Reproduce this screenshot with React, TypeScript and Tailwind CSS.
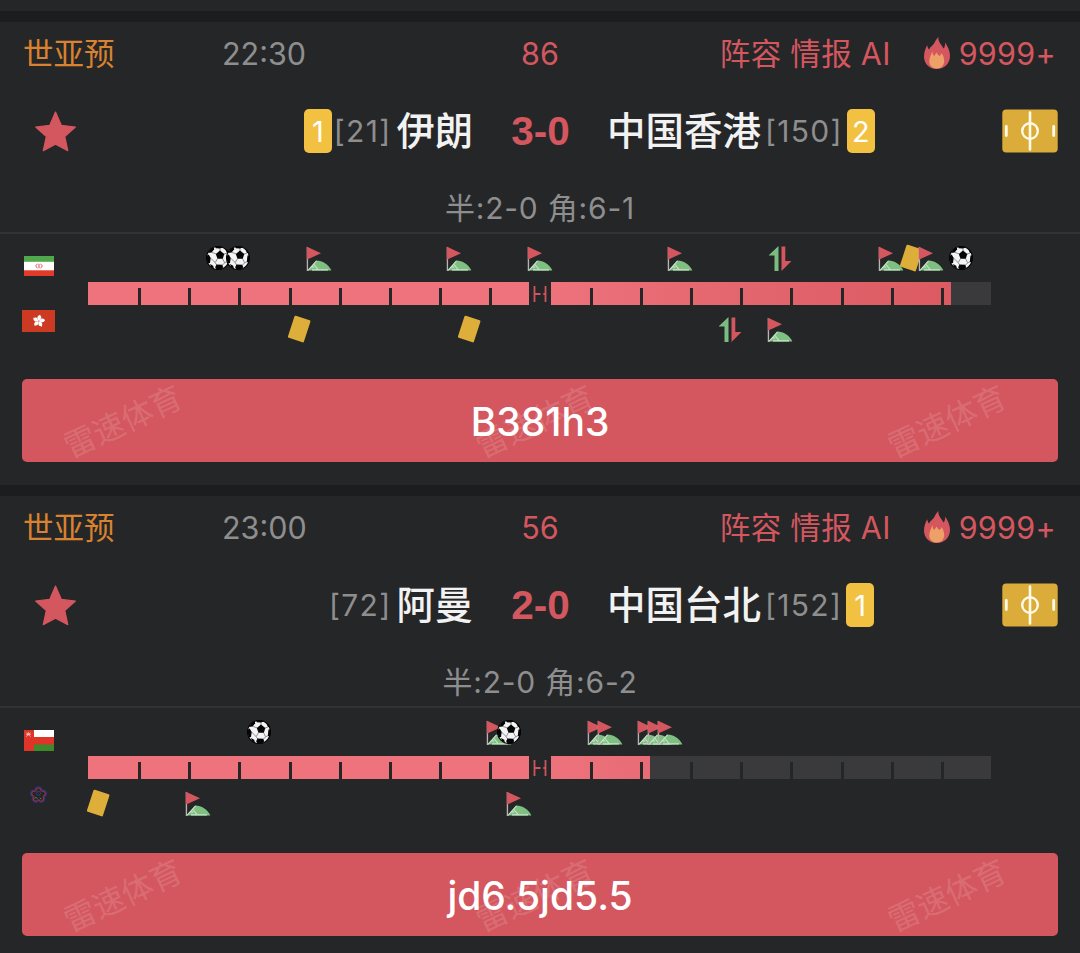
type EventKind = "goal" | "corner" | "card" | "sub";

interface MatchEvent {
  minute: number;
  kind: EventKind;
}

interface Team {
  name: string;
  rank: number;
  cards: number;
  flag: "iran" | "hongkong" | "oman" | "taipei";
  events: MatchEvent[];
}

interface Match {
  league: string;
  time: string;
  minute: number;
  score: string;
  half: string;
  corners: string;
  home: Team;
  away: Team;
  note: string;
}

const matches: Match[] = [
  {
    league: "世亚预",
    time: "22:30",
    minute: 86,
    score: "3-0",
    half: "2-0",
    corners: "6-1",
    home: {
      name: "伊朗",
      rank: 21,
      cards: 1,
      flag: "iran",
      events: [
        { minute: 13, kind: "goal" },
        { minute: 15, kind: "goal" },
        { minute: 23, kind: "corner" },
        { minute: 37, kind: "corner" },
        { minute: 45, kind: "corner" },
        { minute: 59, kind: "corner" },
        { minute: 69, kind: "sub" },
        { minute: 80, kind: "corner" },
        { minute: 82, kind: "card" },
        { minute: 84, kind: "corner" },
        { minute: 87, kind: "goal" },
      ],
    },
    away: {
      name: "中国香港",
      rank: 150,
      cards: 2,
      flag: "hongkong",
      events: [
        { minute: 21, kind: "card" },
        { minute: 38, kind: "card" },
        { minute: 64, kind: "sub" },
        { minute: 69, kind: "corner" },
      ],
    },
    note: "B381h3",
  },
  {
    league: "世亚预",
    time: "23:00",
    minute: 56,
    score: "2-0",
    half: "2-0",
    corners: "6-2",
    home: {
      name: "阿曼",
      rank: 72,
      cards: 0,
      flag: "oman",
      events: [
        { minute: 17, kind: "goal" },
        { minute: 41, kind: "corner" },
        { minute: 42, kind: "goal" },
        { minute: 51, kind: "corner" },
        { minute: 52, kind: "corner" },
        { minute: 56, kind: "corner" },
        { minute: 57, kind: "corner" },
        { minute: 58, kind: "corner" },
      ],
    },
    away: {
      name: "中国台北",
      rank: 152,
      cards: 1,
      flag: "taipei",
      events: [
        { minute: 1, kind: "card" },
        { minute: 11, kind: "corner" },
        { minute: 43, kind: "corner" },
      ],
    },
    note: "jd6.5jd5.5",
  },
];

const tickMinutes = Array.from({ length: 17 }, (_, i) => (i + 1) * 5).filter((m) => m !== 45);

const percent = (minute: number) => `${(minute / 90) * 100}%`;

function BallIcon() {
  return (
    <svg className="w-6 h-6" viewBox="0 0 24 24">
      <circle cx="12" cy="12" r="12" fill="#050505" />
      <circle cx="12" cy="12" r="10.9" fill="#f4f4f4" />
      <g stroke="#777" strokeWidth="0.8" fill="none">
        <path d="M14 5V2M17.800 8.200L21 7M16.500 12.600l2.200 4.200M11.500 12.600l-2.300 4M10 7.800L6 6.500M4.500 12l4.700 4.600 1.500 2.400M18.700 16.800L16.500 19M18.700 16.800l3-1.500" />
      </g>
      <g fill="#050505">
        <path d="M14 4.600l4.300 3.300-1.500 4.800h-5.300L9.800 8z" />
        <path d="M9 .4h7l.8 1-3 1.100-4-.3z" />
        <path d="M2 7l3-4.500 2.800-1.300.3 2-2.400 3.200z" />
        <path d="M.3 10l2.400-1.500 2 3.500-.7 5-2.500.5z" />
        <path d="M10.500 18.500l5.800.2.900 2.500-2 2.400-4.400.1-1.700-2.400z" />
        <path d="M21.500 9.500l2.200-.2.200 4-1.500 3.700-1.600-1.500z" />
        <path d="M19 2.600l2.600 2.200 1 2.600-1.700-.6z" />
        <path d="M4 18l3.200 1.700.8 3-3-1.700z" />
      </g>
    </svg>
  );
}

function CornerIcon() {
  return (
    <svg className="w-[25px] h-[25px]" viewBox="0 0 25 25">
      <path d="M1 24.500L10 14.600c6 .2 11.600 3.600 15 9.900z" fill="#7fbf82" />
      <path d="M1.500 24.300L10 14.800M7 18l5 6.200M5.500 23.900h16M4.600 20.700l3 .4" stroke="#c9e3ca" strokeWidth="1.100" fill="none" />
      <rect x="0" y="1" width="1.600" height="24" fill="#b9b3b6" />
      <path d="M0 .5l14.500 6.800L.2 13.800z" fill="#d4575f" />
    </svg>
  );
}

function CardIcon() {
  return (
    <svg className="w-6 h-[28px]" viewBox="0 0 24 28">
      <rect x="3.800" y="2.400" width="16.800" height="23.200" rx="1.200" fill="#ddae3a" transform="rotate(18 12 14)" />
    </svg>
  );
}

function SubIcon() {
  return (
    <svg className="w-[23px] h-[25px]" viewBox="0 0 23 25">
      <path d="M10 0v25H6V9.500H0z" fill="#7bbd80" />
      <path d="M13 .5h3.800V15H23L13 25z" fill="#d4575f" />
    </svg>
  );
}

function EventIcon({ kind }: { kind: EventKind }) {
  if (kind === "goal") return <BallIcon />;
  if (kind === "corner") return <CornerIcon />;
  if (kind === "card") return <CardIcon />;
  return <SubIcon />;
}

function FlameIcon() {
  return (
    <svg className="w-[26px] h-8" viewBox="0 0 26 32">
      <path
        d="M14.400 0c-.4 3.200 1 5.200 2.700 7.800 1 1.600 1.800 2.600 2.600 3.700C20.900 9.800 21.300 7.500 21 5.400c2.800 3.700 5 8.400 5 13.400C26 26.500 20.600 32 13 32S0 26.600 0 19.400C0 14.900 1.700 11.300 3.200 8.300c.3 2 .9 3.200 1.900 4.300C6.200 9.500 9.400 8.300 10.800 5.200 11.700 3.400 12.800 1.400 14.400 0z"
        fill="#d4575f"
      />
      <path
        d="M8.400 14c0 2.200.5 3.600 1.800 5 .9-1.100 1.500-2.300 2.400-3.400.7 1.500 1.600 2.500 3 3.400 1-.8 1.600-1.600 2-2.900 1.600 2.500 2.600 5.100 2.600 8 0 4.400-3 7.500-7.200 7.500S5.300 28.600 5.300 24.400c0-4 2-7 3.100-10.400z"
        fill="#eda067"
      />
    </svg>
  );
}

function StarIcon() {
  return (
    <svg className="w-[42px] h-[41px]" viewBox="0 0 42 41">
      <path
        d="M21.500 1l5.900 13.400 14 1.600-10.600 9.600 3 14L21.500 33.200 9.300 39.600l3-14L1.700 16l14-1.600z"
        fill="#d4575f"
        stroke="#d4575f"
        strokeWidth="1.200"
        strokeLinejoin="round"
      />
    </svg>
  );
}

function PitchIcon() {
  return (
    <svg className="w-14 h-[44px]" viewBox="0 0 56 44">
      <rect x="0.300" y="0.500" width="55.400" height="43" rx="4" fill="#dbac39" />
      <g fill="none" stroke="#fffbe9" strokeLinecap="round">
        <path d="M28 3.500v37" strokeWidth="2.600" />
        <circle cx="28" cy="22" r="7.800" strokeWidth="2.400" />
        <path d="M4.300 17.500v9M51.700 17.500v9" strokeWidth="2.800" />
      </g>
    </svg>
  );
}

function Flag({ flag }: { flag: Team["flag"] }) {
  if (flag === "iran") {
    return (
      <svg className="w-[30px] h-5" viewBox="0 0 30 20">
        <rect width="30" height="20" fill="#fff" />
        <rect width="30" height="5.800" fill="#4fa84c" />
        <rect y="14.300" width="30" height="5.700" fill="#df3a2a" />
        <path d="M13.500 8c-2 .8-2 3.200 0 4M16.500 8c2 .8 2 3.200 0 4M15 7.800v4.500" stroke="#e04a4a" strokeWidth="1" fill="none" />
      </svg>
    );
  }
  if (flag === "hongkong") {
    return (
      <svg className="w-[33px] h-[22px]" viewBox="0 0 33 22">
        <rect width="33" height="22" fill="#cd3a24" />
        {[8, 80, 152, 224, 296].map((angle) => (
          <path
            key={angle}
            d="M16.800 10.800c-2.600-1.600-2.600-4.800.6-6.200-.2 1.100 1.600 1.400 1.400 2.900-.1 1.300-1.200 2-2 3.300z"
            fill="#fff"
            transform={`rotate(${angle} 16.800 11)`}
          />
        ))}
      </svg>
    );
  }
  if (flag === "oman") {
    return (
      <svg className="w-[30px] h-[21px]" viewBox="0 0 30 21">
        <rect width="30" height="21" fill="#df3528" />
        <rect x="10" width="20" height="7" fill="#fff" />
        <rect x="10" y="14.500" width="20" height="6.500" fill="#3c8a2c" />
        <path d="M2.300 2.600l4 4M6.300 2.600l-4 4M2.200 4.400h4.600M4.300 2.200v2" stroke="#f6c9c4" strokeWidth="0.900" />
      </svg>
    );
  }
  return (
    <svg className="w-[17px] h-[18px]" viewBox="0 0 17 18">
      {[0, 72, 144, 216, 288].map((angle) => (
        <g key={angle} transform={`rotate(${angle} 8.500 9)`} fill="none">
          <path d="M5.300 4.700C4.900 1.900 6.600.8 8.500.8s3.600 1.100 3.200 3.900" stroke="#26358f" strokeWidth="1.100" />
          <path d="M6 5.200C5.600 3 7 2 8.500 2S11.400 3 11 5.200" stroke="#a3303c" strokeWidth="1.100" />
        </g>
      ))}
      <circle cx="8.500" cy="7.300" r="2" fill="none" stroke="#27408f" strokeWidth="1" />
      <path d="M4.500 12.500l1.500-1.300 1.300 1.600M9.800 12l1.500 1" stroke="#5e8a4e" strokeWidth="0.900" fill="none" />
    </svg>
  );
}

function YellowCount({ count }: { count: number }) {
  return (
    <span className="w-7 h-11 rounded-[5px] bg-[#f3c142] text-white text-[29px] flex items-center justify-center pt-[2px]">
      {count}
    </span>
  );
}

function Rank({ value }: { value: number }) {
  return <span className="text-[30px] tracking-[1.3px] text-[#8e8e8f]">[{value}]</span>;
}

function EventRow({ events }: { events: MatchEvent[] }) {
  return (
    <div className="relative h-7">
      {events.map((event, i) => (
        <span
          key={i}
          className="absolute top-0 h-7 flex items-center -translate-x-1/2"
          style={{ left: percent(event.minute) }}
        >
          <EventIcon kind={event.kind} />
        </span>
      ))}
    </div>
  );
}

function ProgressBar({ minute }: { minute: number }) {
  return (
    <div className="relative h-[23px] flex justify-end bg-linear-to-r from-[#ee737d] from-50% via-[#e2646c] via-75% to-[#dc5b63] to-95%">
      <div className="bg-[#3a3a3c]" style={{ width: percent(90 - minute) }} />
      {tickMinutes.map((m) => (
        <span
          key={m}
          className="absolute bottom-0 w-[3px] h-[17px] bg-[#252628]"
          style={{ left: percent(m) }}
        />
      ))}
      <div className="absolute inset-y-0 left-1/2 w-[22px] -translate-x-1/2 bg-[#252628] flex items-center justify-center">
        <svg className="w-[14px] h-4" viewBox="0 0 14 16">
          <path d="M1.500 0v16M12.500 0v16M2 8h5.500M10.300 8h2" stroke="#cf555d" strokeWidth="1.800" />
        </svg>
      </div>
    </div>
  );
}

function NoteBanner({ text }: { text: string }) {
  return (
    <div className="relative mx-[22px] h-[83px] pt-[3px] rounded-[5px] bg-[#d4575f] flex items-center justify-center">
      <div className="absolute inset-0 pt-[3px] flex items-center -ml-[105px]">
        {[0, 1, 2].map((i) => (
          <div key={i} className="w-[412px] shrink-0 text-center">
            <span className="inline-block -rotate-[25deg] text-[31.500px] leading-none text-white/15">雷速体育</span>
          </div>
        ))}
      </div>
      <span className="relative text-[39px] font-medium text-white">{text}</span>
    </div>
  );
}

function MatchCard({ match }: { match: Match }) {
  const { home, away } = match;
  return (
    <section className="h-[474px] shrink-0 border-t-[11px] border-[#1c1d1f]">
      <header className="h-[62px] pt-[2px] pl-[23px] pr-6 flex items-center text-[30.500px] whitespace-nowrap">
        <span className="w-[199px] text-[#d9822f]">{match.league}</span>
        <span className="w-[252px] text-[#8e8e8f]">{match.time}</span>
        <span className="w-[132px] text-center text-[#d4575f]">{match.minute}</span>
        <span className="flex-1 flex items-center justify-end tracking-[0.3px] text-[#d4575f]">
          <span>阵容 情报 AI</span>
          <span className="ml-[33px] mr-[9px] mb-[3px]">
            <FlameIcon />
          </span>
          <span>9999+</span>
        </span>
      </header>

      <div className="h-[94px] pl-[34px] pr-[22px] flex items-center">
        <div className="w-[439px] flex items-center">
          <StarIcon />
          <div className="ml-auto flex items-center">
            {home.cards > 0 && <YellowCount count={home.cards} />}
            <span className="ml-[2px] mr-[5px] flex">
              <Rank value={home.rank} />
            </span>
            <span className="text-[38.300px] font-medium text-[#f2f2f2] leading-none">{home.name}</span>
          </div>
        </div>
        <strong className="w-[135px] text-center font-['Liberation_Sans',sans-serif] text-[40.500px] font-bold text-[#d4575f]">
          {match.score}
        </strong>
        <div className="flex-1 flex items-center">
          <span className="text-[38.500px] font-medium text-[#f2f2f2] leading-none -ml-px">{away.name}</span>
          <span className="ml-[4px] mr-1 flex">
            <Rank value={away.rank} />
          </span>
          {away.cards > 0 && <YellowCount count={away.cards} />}
          <span className="ml-auto">
            <PitchIcon />
          </span>
        </div>
      </div>

      <p className="h-[54px] flex items-center justify-center pt-[6px] text-[30px] tracking-[0.8px] text-[#8e8e8f] whitespace-pre">
        半:{match.half} 角:{match.corners}
      </p>

      <div className="h-[147px] border-t-2 border-[#323335] flex">
        <div className="w-[88px] pt-[2px] pl-[10px] flex flex-col">
          <div className="w-[57px] h-[60px] flex items-center justify-center">
            <Flag flag={home.flag} />
          </div>
          <div className="w-[57px] h-[50px] flex items-center justify-center">
            <Flag flag={away.flag} />
          </div>
        </div>
        <div className="w-[903px] pt-[10px]">
          <EventRow events={home.events} />
          <div className="mt-[10px] mb-[10px]">
            <ProgressBar minute={match.minute} />
          </div>
          <EventRow events={away.events} />
        </div>
      </div>

      <NoteBanner text={match.note} />
    </section>
  );
}

export default function App() {
  return (
    <main className="w-[1080px] h-[953px] pt-[11px] overflow-hidden flex flex-col bg-[#252628] font-[Inter,'Noto_Sans_CJK_SC',sans-serif]">
      {matches.map((match) => (
        <MatchCard key={match.time} match={match} />
      ))}
    </main>
  );
}
